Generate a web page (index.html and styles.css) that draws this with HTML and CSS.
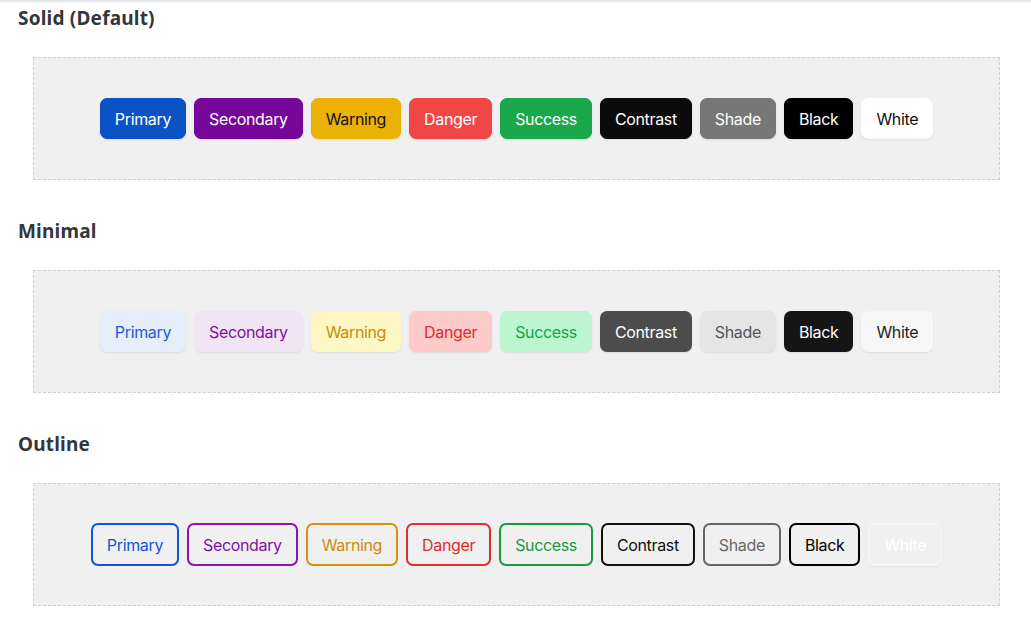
FILE: index.html
```html
<!DOCTYPE html>
<html>
<head>
<meta charset="utf-8">
<link rel="stylesheet" href="styles.css">
</head>
<body>
<main class="page">
  <section class="section">
    <h2 class="title">Solid (Default)</h2>
    <div class="demo">
      <button class="btn solid primary">Primary</button>
      <button class="btn solid secondary">Secondary</button>
      <button class="btn solid warning">Warning</button>
      <button class="btn solid danger">Danger</button>
      <button class="btn solid success">Success</button>
      <button class="btn solid contrast">Contrast</button>
      <button class="btn solid shade">Shade</button>
      <button class="btn solid black">Black</button>
      <button class="btn solid white">White</button>
    </div>
  </section>
  <section class="section">
    <h2 class="title">Minimal</h2>
    <div class="demo">
      <button class="btn minimal primary">Primary</button>
      <button class="btn minimal secondary">Secondary</button>
      <button class="btn minimal warning">Warning</button>
      <button class="btn minimal danger">Danger</button>
      <button class="btn minimal success">Success</button>
      <button class="btn minimal contrast">Contrast</button>
      <button class="btn minimal shade">Shade</button>
      <button class="btn minimal black">Black</button>
      <button class="btn minimal white">White</button>
    </div>
  </section>
  <section class="section">
    <h2 class="title">Outline</h2>
    <div class="demo demo-outline">
      <button class="btn outline primary">Primary</button>
      <button class="btn outline secondary">Secondary</button>
      <button class="btn outline warning">Warning</button>
      <button class="btn outline danger">Danger</button>
      <button class="btn outline success">Success</button>
      <button class="btn outline contrast">Contrast</button>
      <button class="btn outline shade">Shade</button>
      <button class="btn outline black">Black</button>
      <button class="btn outline white">White</button>
    </div>
  </section>
</main>
</body>
</html>
```

FILE: styles.css
```css
html, body {
  margin: 0;
  padding: 0;
  background: #ffffff;
}
body {
  border-top: 2px solid #e3e6ea;
}
.page {
  padding: 4px 31px 0 18px;
}
.section {
  margin-bottom: 39px;
}
.title {
  margin: 0 0 27px 0;
  font-family: "Noto Sans", "DejaVu Sans", sans-serif;
  font-weight: 700;
  font-size: 19px;
  line-height: 24px;
  color: #33363b;
  letter-spacing: 0.2px;
}
.demo {
  margin-left: 15px;
  background: #f0f0f0;
  border: 1px dashed #cfcfcf;
  padding: 40px 0;
  display: flex;
  justify-content: center;
  gap: 8px;
}
.demo-outline {
  padding: 39px 0;
}
.btn {
  font-family: Inter, "Liberation Sans", sans-serif;
  font-size: 16px;
  letter-spacing: -0.35px;
  line-height: 18px;
  padding: 11px 14px 10px;
  border-radius: 7px;
  border: 1px solid transparent;
  box-shadow: 0 1px 2px rgba(0,0,0,0.08);
  cursor: pointer;
}

/* Solid */
.solid.primary { background: #0b52c4; border-color: #0b52c4; color: #fff; }
.solid.secondary { background: #76079a; border-color: #76079a; color: #fff; }
.solid.warning { background: #ebb105; border-color: #ebb105; color: #111; }
.solid.danger { background: #f04646; border-color: #f04646; color: #fff; }
.solid.success { background: #1ba74b; border-color: #1ba74b; color: #fff; }
.solid.contrast { background: #0b0b0b; border-color: #0b0b0b; color: #fff; }
.solid.shade { background: #777777; border-color: #777777; color: #fff; }
.solid.black { background: #000; border-color: #000; color: #fff; }
.solid.white { background: #fff; border-color: #fff; color: #111; }

/* Minimal */
.minimal.primary { background: #e5eef9; color: #1d5bd0; }
.minimal.secondary { background: #f1e4f5; color: #7e10a2; }
.minimal.warning { background: #fdf7c3; color: #c98a0a; }
.minimal.danger { background: #fecaca; color: #df2b2b; }
.minimal.success { background: #bcf6d1; color: #18a34a; }
.minimal.contrast { background: #4c4c4c; color: #fff; }
.minimal.shade { background: #e5e5e5; color: #555; }
.minimal.black { background: #151515; color: #fff; }
.minimal.white { background: #f6f6f6; color: #222; }

/* Outline */
.outline {
  background: transparent;
  border-width: 2px;
  box-shadow: none;
}
.outline.primary { border-color: #1456d0; color: #1456d0; }
.outline.secondary { border-color: #8a16b0; color: #7e10a2; }
.outline.warning { border-color: #d8920f; color: #d08a0c; }
.outline.danger { border-color: #e22e2e; color: #df2b2b; }
.outline.success { border-color: #1b9a45; color: #18993f; }
.outline.contrast { border-color: #111; color: #111; }
.outline.shade { border-color: #666; color: #666; }
.outline.black { border-color: #000; color: #000; }
.outline.white { border-color: #f5f5f5; color: #fff; box-shadow: 0 1px 2px rgba(0,0,0,0.06); }
```
